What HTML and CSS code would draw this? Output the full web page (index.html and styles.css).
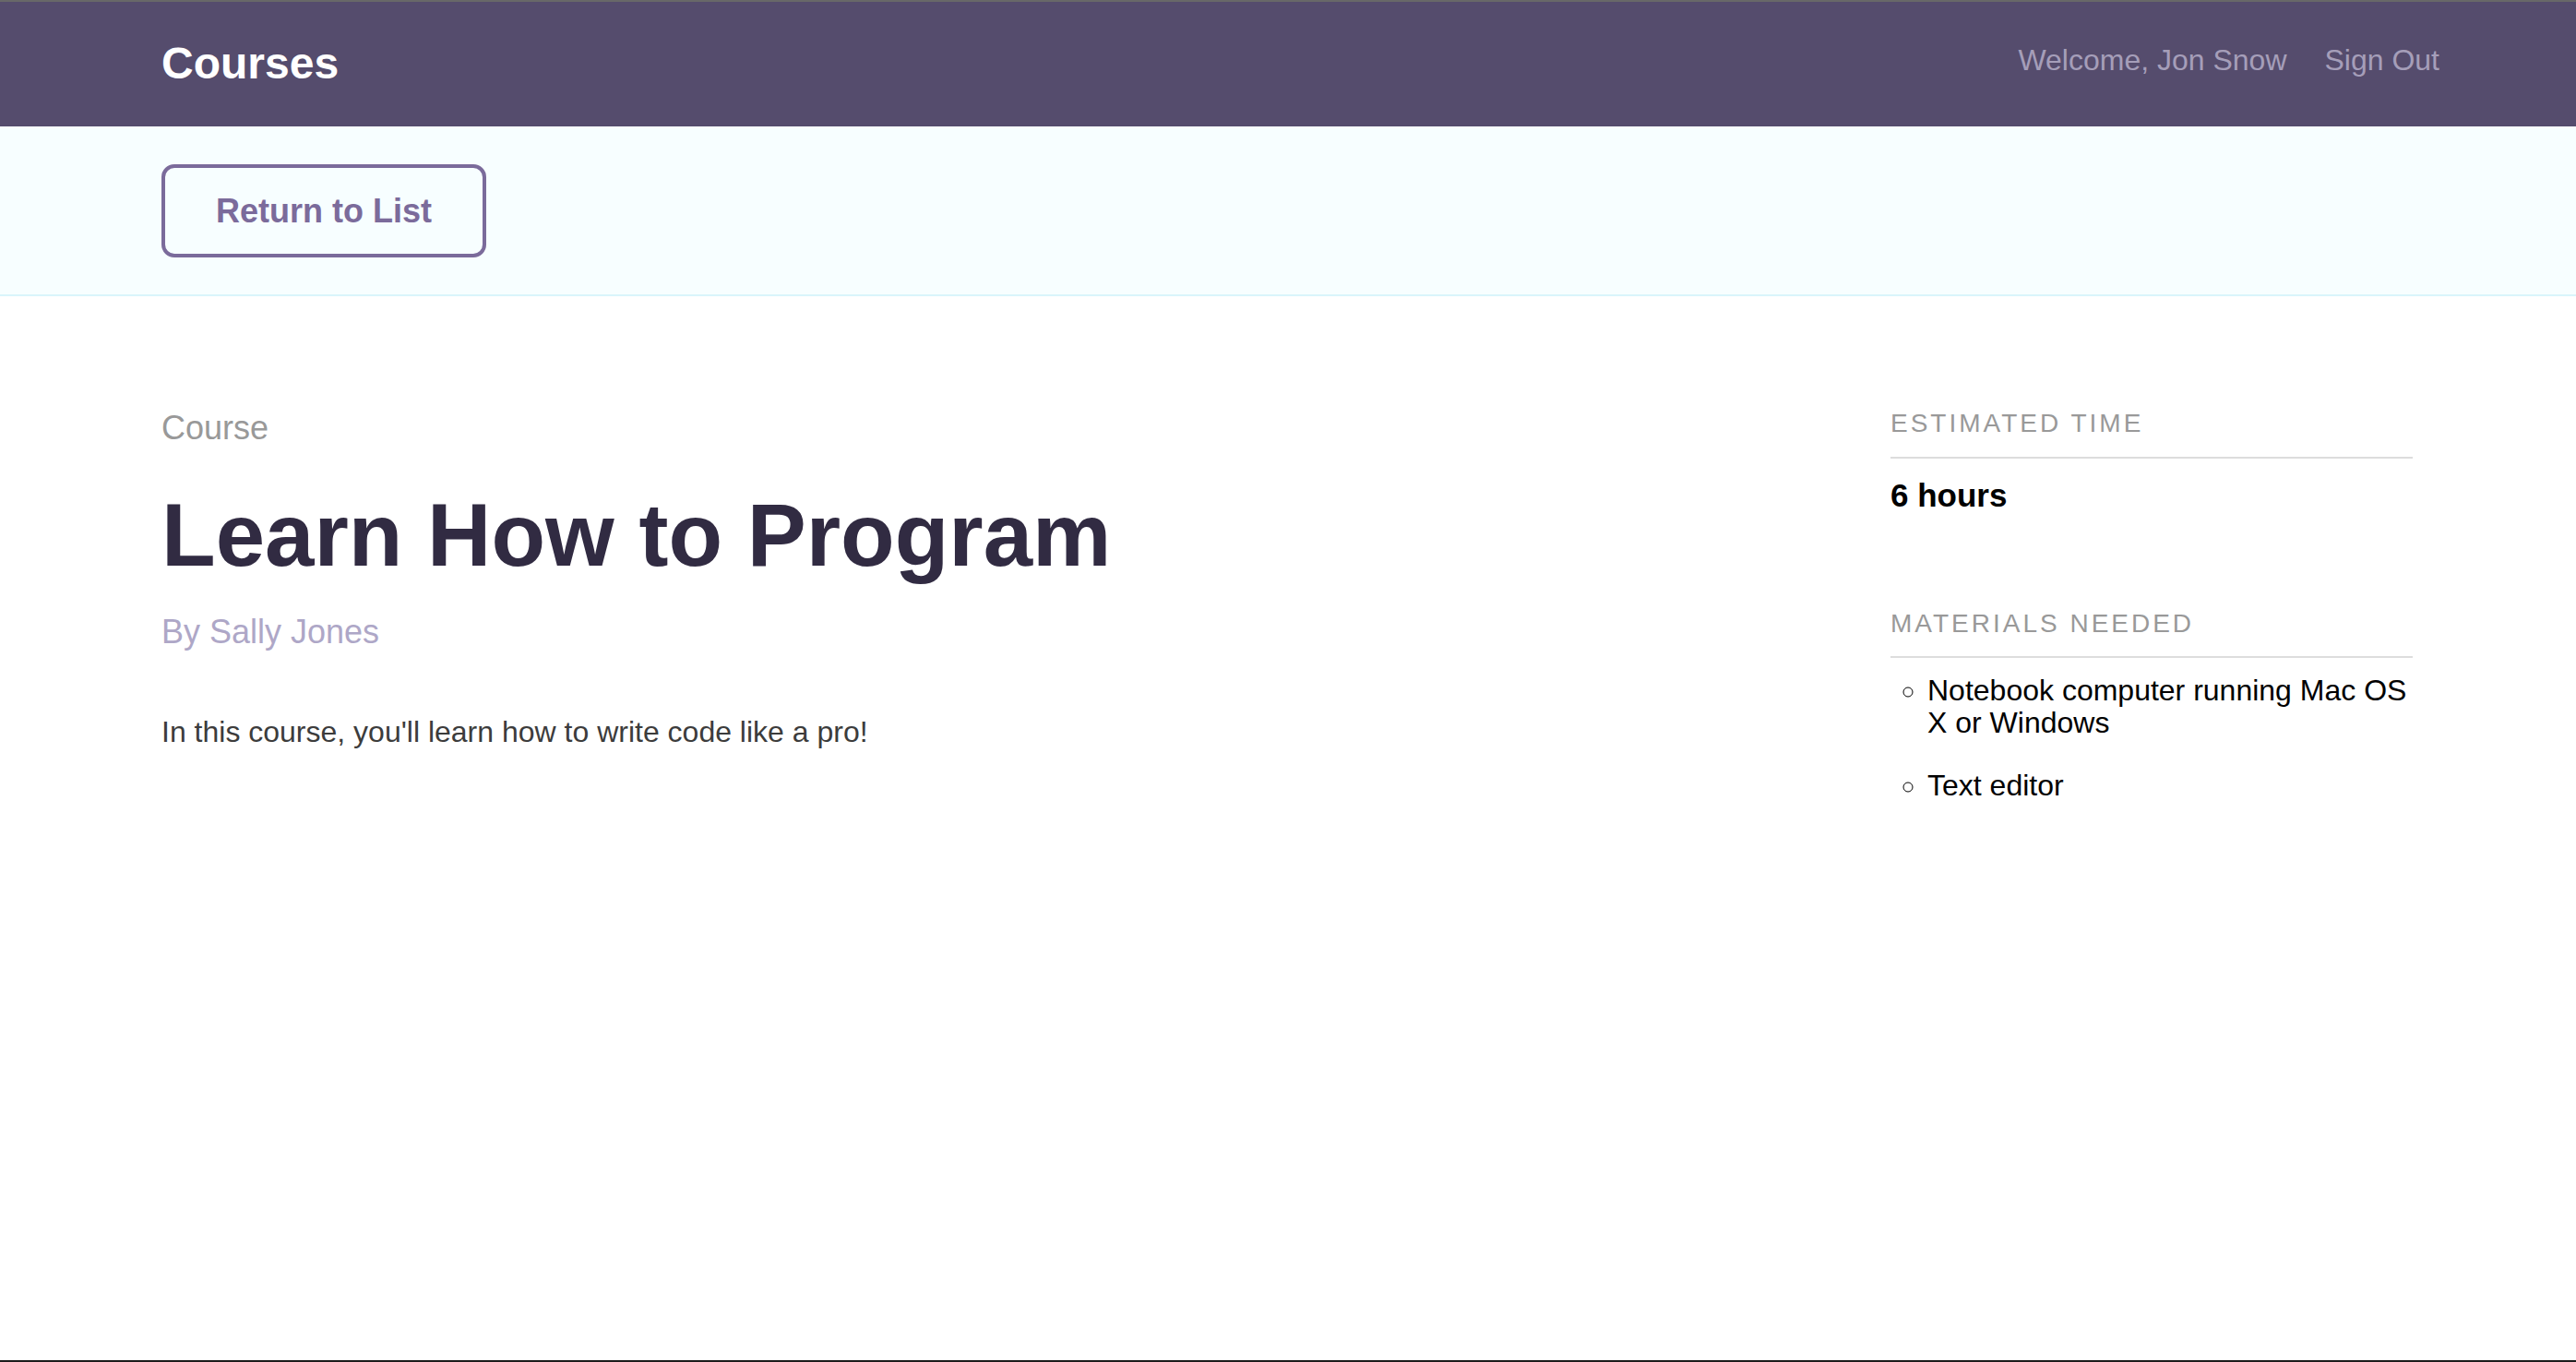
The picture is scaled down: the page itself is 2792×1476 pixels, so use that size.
FILE: index.html
```html
<!DOCTYPE html>
<html lang="en">
<head>
<meta charset="utf-8">
<title>Courses</title>
<link rel="stylesheet" href="styles.css">
</head>
<body>
<div class="edge edge-top"></div>
<header class="header">
  <h1 class="logo">Courses</h1>
  <nav class="nav">
    <span class="nav-item">Welcome, Jon Snow</span>
    <a class="nav-item" href="#">Sign Out</a>
  </nav>
</header>
<div class="actions">
  <a class="button-secondary" href="#">Return to List</a>
</div>
<main class="details">
  <section class="course-main">
    <h4 class="course-label">Course</h4>
    <h3 class="course-title">Learn How to Program</h3>
    <p class="course-author">By Sally Jones</p>
    <p class="course-desc">In this course, you'll learn how to write code like a pro!</p>
  </section>
  <aside class="course-side">
    <h4 class="side-heading">Estimated Time</h4>
    <h3 class="side-time">6 hours</h3>
    <h4 class="side-heading side-heading-second">Materials Needed</h4>
    <ul class="materials">
      <li>Notebook computer running Mac OS X or Windows</li>
      <li>Text editor</li>
    </ul>
  </aside>
</main>
<div class="edge edge-bottom"></div>
</body>
</html>
```
FILE: styles.css
```css
* { box-sizing: border-box; }

html, body {
  margin: 0;
  padding: 0;
}

body {
  height: 1476px;
  display: flex;
  flex-direction: column;
  font-family: "Liberation Sans", Arial, Helvetica, sans-serif;
  background: #ffffff;
  color: #000;
}

.edge {
  height: 2px;
  flex: 0 0 2px;
}
.edge-top { background: #686868; }
.edge-bottom { background: #1c1c1c; }

.header {
  flex: 0 0 135px;
  height: 135px;
  background: #554c6d;
  display: flex;
  justify-content: space-between;
  align-items: flex-start;
  padding: 0 148px 0 175px;
}

.logo {
  margin: 43px 0 0 0;
  font-size: 48px;
  line-height: 1;
  font-weight: 700;
  color: #ffffff;
}

.nav {
  display: flex;
  gap: 41px;
  margin-top: 47px;
}

.nav-item {
  font-size: 32px;
  line-height: 1;
  color: #a59eb9;
  text-decoration: none;
}

.actions {
  flex: 0 0 auto;
  background: #f7feff;
  border-bottom: 2px solid #d9f5fb;
  padding: 41px 175px 40px;
}

.button-secondary {
  display: inline-flex;
  align-items: center;
  justify-content: center;
  height: 101px;
  width: 352px;
  border: 4px solid #7b6b9b;
  border-radius: 14px;
  font-size: 36px;
  font-weight: 700;
  color: #7b6b9b;
  text-decoration: none;
  background: #f7feff;
}

.details {
  flex: 1 1 auto;
  display: grid;
  grid-template-columns: 1fr 566px;
  column-gap: 100px;
  padding: 121px 177px 0 175px;
  align-items: start;
}

.course-label {
  margin: 0;
  font-size: 36px;
  line-height: 1.2;
  font-weight: 400;
  color: #999999;
}

.course-title {
  margin: 37px 0 0;
  font-size: 96px;
  line-height: 1.2;
  font-weight: 700;
  color: #312b42;
}

.course-author {
  margin: 26px 0 0;
  font-size: 36px;
  line-height: 1.2;
  color: #aea7c7;
}

.course-desc {
  margin: 67px 0 0;
  font-size: 32px;
  line-height: 1.2;
  color: #3c3c3c;
}

.side-heading {
  margin: 0;
  font-size: 28px;
  line-height: 1.2;
  font-weight: 400;
  letter-spacing: 3px;
  text-transform: uppercase;
  color: #999999;
  padding-bottom: 19px;
  border-bottom: 2px solid #dddddd;
}

.side-heading-second {
  margin-top: 101px;
}

.side-time {
  margin: 19px 0 0;
  font-size: 35px;
  line-height: 1.2;
  font-weight: 700;
  color: #000;
}

.materials {
  margin: 18px 0 0;
  padding-left: 40px;
  list-style: circle;
  font-size: 32px;
  line-height: 35px;
  color: #000;
}

.materials li + li {
  margin-top: 33px;
}
```
